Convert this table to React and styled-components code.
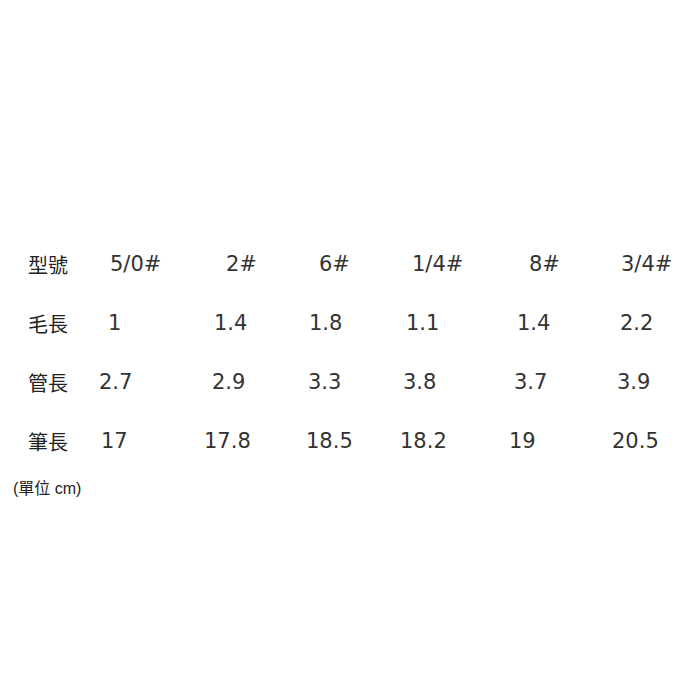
import React from 'react'
import styled, { createGlobalStyle } from 'styled-components'

const GlobalStyle = createGlobalStyle`
	html, body {
		margin: 0;
		padding: 0;
		background: #fff;
	}
	body {
		width: 690px;
		height: 690px;
		overflow: hidden;
	}
`

const rows = [
	{ label: '型號', cells: [['5/0#', 11], ['2#', 22], ['6#', 15], ['1/4#', 13], ['8#', 20], ['3/4#', 10]] },
	{ label: '毛長', cells: [['1', 9], ['1.4', 10], ['1.8', 5], ['1.1', 7], ['1.4', 8], ['2.2', 9]] },
	{ label: '管長', cells: [['2.7', 0], ['2.9', 8], ['3.3', 4], ['3.8', 4], ['3.7', 5], ['3.9', 6]] },
	{ label: '筆長', cells: [['17', 2], ['17.8', 0], ['18.5', 2], ['18.2', 1], ['19', 0], ['20.5', 1]] },
]

const App = () => (
	<Page>
		<GlobalStyle />
		<SizeTable>
			{rows.map(row => (
				<Row key={row.label}>
					<Label>{row.label}</Label>
					{row.cells.map(([text, indent], i) => (
						<Cell key={i} $indent={indent}>{text}</Cell>
					))}
				</Row>
			))}
		</SizeTable>
		<Note>(單位 cm)</Note>
	</Page>
)

export default App

const Page = styled.div`
	display: flex;
	flex-direction: column;
	padding-top: 235px;
	color: #333;
`

const SizeTable = styled.div`
	display: flex;
	flex-direction: column;
`

const Row = styled.div`
	display: grid;
	grid-template-columns: 99px 105px 100px 95px 110px 102px 1fr;
	height: 59px;
	align-items: center;
`

const Label = styled.span`
	padding-left: 28px;
	font-family: "Noto Sans CJK TC", sans-serif;
	font-size: 20px;
	color: #222;
	line-height: 1;
`

const Cell = styled.span`
	padding-left: ${({ $indent }) => $indent}px;
	font-family: "DejaVu Sans", Verdana, sans-serif;
	font-size: 21px;
	line-height: 1;
	white-space: nowrap;
`

const Note = styled.div`
	margin-top: 8px;
	padding-left: 13px;
	font-family: "Liberation Sans", "Noto Sans CJK TC", sans-serif;
	font-size: 16px;
	line-height: 20px;
	color: #222;
`
